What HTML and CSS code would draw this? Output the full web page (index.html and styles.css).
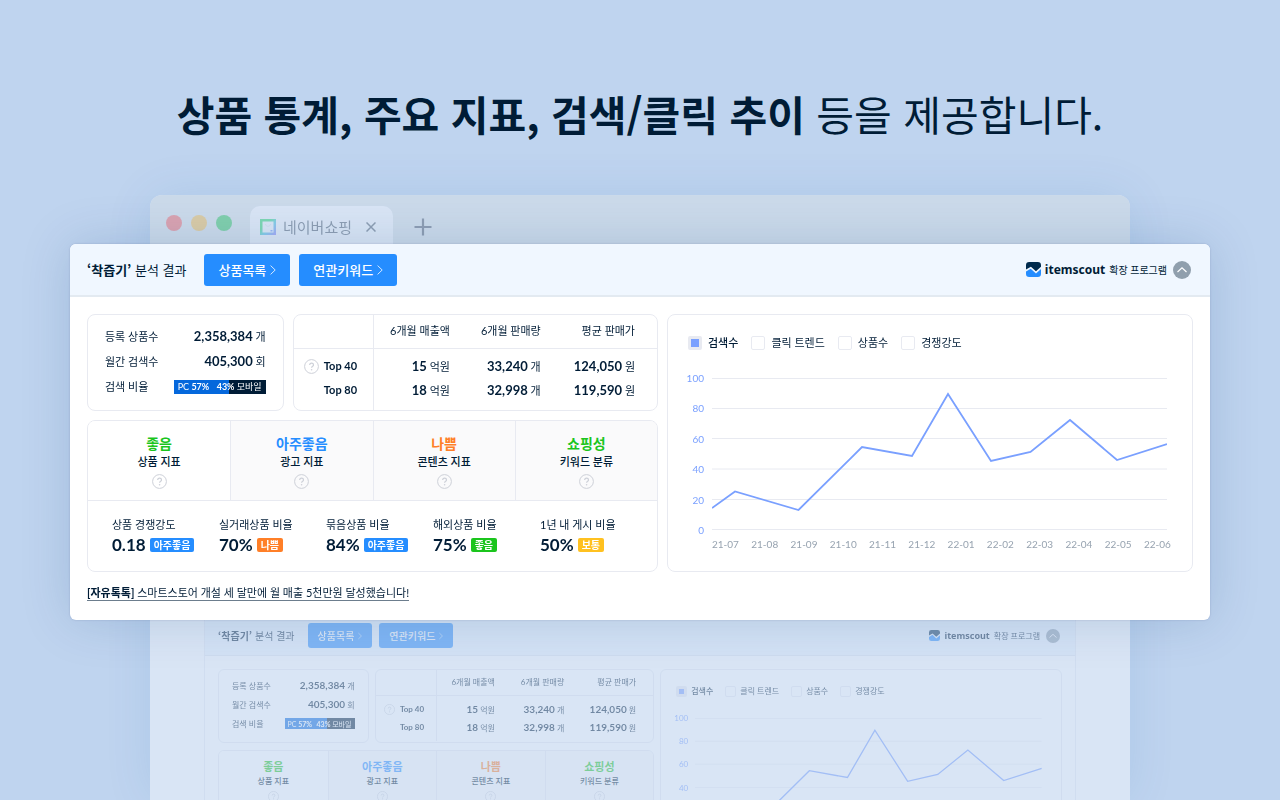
FILE: index.html
```html
<!DOCTYPE html>
<html lang="ko">
<head>
    <meta charset="UTF-8">
    <meta name="viewport" content="width=device-width, initial-scale=1.0">
    <title>itemscout 확장 프로그램</title>
    <link rel="stylesheet" href="styles.css">
</head>
<body>
    <!-- shared icons -->
    <svg class="sprite" width="0" height="0">
        <symbol id="logo" viewBox="0 0 14 14">
            <path d="M3 0h8a3 3 0 0 1 3 3v1.5L9.3 8.6 4.6 4.4 0 7V3a3 3 0 0 1 3-3z" fill="#002b4d"/>
            <path d="M0 8.8l4.4-2.6 4.9 4.6L14 6.6V11a3 3 0 0 1-3 3H3a3 3 0 0 1-3-3z" fill="#258dff"/>
        </symbol>
        <symbol id="chevron" viewBox="0 0 6 10">
            <path d="M.6.6L5.2 5 .6 9.4" fill="none" stroke="#fff" stroke-width=".8"/>
        </symbol>
        <symbol id="up" viewBox="0 0 18 18">
            <circle cx="9" cy="9" r="9" fill="#909fad"/>
            <path d="M4.5 11L9 6.8l4.500 4.200" fill="none" stroke="#fff" stroke-width="1.200"/>
        </symbol>
        <symbol id="help" viewBox="0 0 15 15">
            <circle cx="7.5" cy="7.5" r="6.900" fill="none" stroke="#cdd0d8" stroke-width="1"/>
            <path d="M5.700 6.100c0-1.200.8-1.900 1.900-1.900s1.900.7 1.900 1.700c0 1.300-1.900 1.400-1.900 2.900" fill="none" stroke="#cdd0d8" stroke-width="1.200"/>
            <circle cx="7.600" cy="10.700" r=".8" fill="#cdd0d8"/>
        </symbol>
        <symbol id="plot" viewBox="0 0 455 152" preserveAspectRatio="none">
            <path class="plot-grid" d="M0 .5h455M0 30.500h455M0 60.500h455M0 91h455M0 121.500h455M0 151.500h455"/>
            <path class="plot-line" d="M0 130L23 113.500 86.500 132 150 69 200 78 236 16 279 83 318.500 74 358 42 405 82 455 66"/>
        </symbol>
    </svg>

    <h1 class="headline"><strong>상품 통계, 주요 지표, 검색/클릭 추이</strong> 등을 제공합니다.</h1>

    <main class="stage">
        <div class="browser">
            <div class="browser-bar">
                <div class="dots">
                    <span class="dot red"></span>
                    <span class="dot yellow"></span>
                    <span class="dot green"></span>
                </div>
                <div class="browser-tab">
                    <svg class="favicon" viewBox="0 0 16 16">
                        <defs>
                            <linearGradient id="fav" x1="0" y1="0" x2="1" y2="1">
                                <stop offset=".3" stop-color="#1fdd60"/>
                                <stop offset=".6" stop-color="#35c3e0"/>
                                <stop offset="1" stop-color="#7a7cff"/>
                            </linearGradient>
                        </defs>
                        <rect x="1.250" y="1.250" width="13.500" height="13.500" fill="none" stroke="url(#fav)" stroke-width="2.500"/>
                        <path d="M5.500 5c0 3 5 3 5 0" fill="none" stroke="#e3e8ee" stroke-width="1"/>
                        <rect x="10.500" y="11" width="2" height="1.500" fill="#5a8cff"/>
                    </svg>
                    <span>네이버쇼핑</span>
                    <svg class="close" viewBox="0 0 10 10"><path d="M.5.5l9 9M9.500.5l-9 9" stroke="#47525e" stroke-width="1.500"/></svg>
                </div>
                <svg class="plus" viewBox="0 0 18 18"><path d="M9 .5v17M.5 9h17" stroke="#47525e" stroke-width="2.200"/></svg>
            </div>
            <div class="site">
                <section class="panel small">
                    <header class="panel-head">
                        <h2 class="panel-title"><b>‘착즙기’</b> 분석 결과</h2>
                        <button class="btn">상품목록<svg class="chevron"><use href="#chevron"/></svg></button>
                        <button class="btn">연관키워드<svg class="chevron"><use href="#chevron"/></svg></button>
                        <div class="brand">
                            <svg class="logo"><use href="#logo"/></svg>
                            <span class="brand-name">itemscout</span>
                            <span class="brand-sub">확장 프로그램</span>
                            <button class="toggle" aria-label="접기"><svg><use href="#up"/></svg></button>
                        </div>
                    </header>
                    <div class="panel-body">
                        <div class="left">
                            <div class="summary">
                                <dl class="card stats">
                                    <div><dt>등록 상품수</dt><dd><b>2,358,384</b> 개</dd></div>
                                    <div><dt>월간 검색수</dt><dd><b>405,300</b> 회</dd></div>
                                    <div><dt>검색 비율</dt><dd class="ratio"><span>PC <b>57%</b></span><span><b>43%</b> 모바일</span></dd></div>
                                </dl>
                                <div class="card">
                                    <table class="sales">
                                        <thead>
                                            <tr><th></th><th>6개월 매출액</th><th>6개월 판매량</th><th>평균 판매가</th></tr>
                                        </thead>
                                        <tbody>
                                            <tr><th><svg class="help"><use href="#help"/></svg>Top 40</th><td><b>15</b> 억원</td><td><b>33,240</b> 개</td><td><b>124,050</b> 원</td></tr>
                                            <tr><th>Top 80</th><td><b>18</b> 억원</td><td><b>32,998</b> 개</td><td><b>119,590</b> 원</td></tr>
                                        </tbody>
                                    </table>
                                </div>
                            </div>
                            <div class="card">
                                <div class="grades">
                                    <button class="grade active"><strong class="c-green">좋음</strong><span>상품 지표</span><svg class="help"><use href="#help"/></svg></button>
                                    <button class="grade"><strong class="c-blue">아주좋음</strong><span>광고 지표</span><svg class="help"><use href="#help"/></svg></button>
                                    <button class="grade"><strong class="c-orange">나쁨</strong><span>콘텐츠 지표</span><svg class="help"><use href="#help"/></svg></button>
                                    <button class="grade"><strong class="c-green">쇼핑성</strong><span>키워드 분류</span><svg class="help"><use href="#help"/></svg></button>
                                </div>
                            </div>
                        </div>
                        <div class="card chart">
                            <div class="legend">
                                <label><input type="checkbox" checked>검색수</label>
                                <label><input type="checkbox">클릭 트렌드</label>
                                <label><input type="checkbox">상품수</label>
                                <label><input type="checkbox">경쟁강도</label>
                            </div>
                            <div class="plot">
                                <div class="y-axis"><span>100</span><span>80</span><span>60</span><span>40</span><span>20</span><span>0</span></div>
                                <svg class="plot-area"><use href="#plot"/></svg>
                            </div>
                        </div>
                    </div>
                </section>
            </div>
        </div>

        <section class="panel front">
            <header class="panel-head">
                <h2 class="panel-title"><b>‘착즙기’</b> 분석 결과</h2>
                <button class="btn">상품목록<svg class="chevron"><use href="#chevron"/></svg></button>
                <button class="btn">연관키워드<svg class="chevron"><use href="#chevron"/></svg></button>
                <div class="brand">
                    <svg class="logo"><use href="#logo"/></svg>
                    <span class="brand-name">itemscout</span>
                    <span class="brand-sub">확장 프로그램</span>
                    <button class="toggle" aria-label="접기"><svg><use href="#up"/></svg></button>
                </div>
            </header>
            <div class="panel-body">
                <div class="left">
                    <div class="summary">
                        <dl class="card stats">
                            <div><dt>등록 상품수</dt><dd><b>2,358,384</b> 개</dd></div>
                            <div><dt>월간 검색수</dt><dd><b>405,300</b> 회</dd></div>
                            <div><dt>검색 비율</dt><dd class="ratio"><span>PC <b>57%</b></span><span><b>43%</b> 모바일</span></dd></div>
                        </dl>
                        <div class="card">
                            <table class="sales">
                                <thead>
                                    <tr><th></th><th>6개월 매출액</th><th>6개월 판매량</th><th>평균 판매가</th></tr>
                                </thead>
                                <tbody>
                                    <tr><th><svg class="help"><use href="#help"/></svg>Top 40</th><td><b>15</b> 억원</td><td><b>33,240</b> 개</td><td><b>124,050</b> 원</td></tr>
                                    <tr><th>Top 80</th><td><b>18</b> 억원</td><td><b>32,998</b> 개</td><td><b>119,590</b> 원</td></tr>
                                </tbody>
                            </table>
                        </div>
                    </div>
                    <div class="card">
                        <div class="grades">
                            <button class="grade active"><strong class="c-green">좋음</strong><span>상품 지표</span><svg class="help"><use href="#help"/></svg></button>
                            <button class="grade"><strong class="c-blue">아주좋음</strong><span>광고 지표</span><svg class="help"><use href="#help"/></svg></button>
                            <button class="grade"><strong class="c-orange">나쁨</strong><span>콘텐츠 지표</span><svg class="help"><use href="#help"/></svg></button>
                            <button class="grade"><strong class="c-green">쇼핑성</strong><span>키워드 분류</span><svg class="help"><use href="#help"/></svg></button>
                        </div>
                        <dl class="rates">
                            <div><dt>상품 경쟁강도</dt><dd>0.18<span class="badge blue">아주좋음</span></dd></div>
                            <div><dt>실거래상품 비율</dt><dd>70%<span class="badge orange">나쁨</span></dd></div>
                            <div><dt>묶음상품 비율</dt><dd>84%<span class="badge blue">아주좋음</span></dd></div>
                            <div><dt>해외상품 비율</dt><dd>75%<span class="badge green">좋음</span></dd></div>
                            <div><dt>1년 내 게시 비율</dt><dd>50%<span class="badge yellow">보통</span></dd></div>
                        </dl>
                    </div>
                </div>
                <div class="card chart">
                    <div class="legend">
                        <label><input type="checkbox" checked>검색수</label>
                        <label><input type="checkbox">클릭 트렌드</label>
                        <label><input type="checkbox">상품수</label>
                        <label><input type="checkbox">경쟁강도</label>
                    </div>
                    <div class="plot">
                        <div class="y-axis"><span>100</span><span>80</span><span>60</span><span>40</span><span>20</span><span>0</span></div>
                        <svg class="plot-area"><use href="#plot"/></svg>
                    </div>
                    <div class="x-axis">
                        <span>21-07</span><span>21-08</span><span>21-09</span><span>21-10</span><span>21-11</span><span>21-12</span><span>22-01</span><span>22-02</span><span>22-03</span><span>22-04</span><span>22-05</span><span>22-06</span>
                    </div>
                </div>
            </div>
            <a class="talk" href="#"><b>[자유톡톡]</b> 스마트스토어 개설 세 달만에 월 매출 5천만원 달성했습니다!</a>
        </section>
    </main>
</body>
</html>
```

FILE: styles.css
```css
* {
    box-sizing: border-box;
}
body {
    margin: 0;
    height: 100vh;
    overflow: hidden;
    display: flex;
    flex-direction: column;
    background: #bfd4ef;
    color: #001c36;
    font-family: Lato, "Noto Sans CJK KR", sans-serif;
}
h1, h2, dl, dd {
    margin: 0;
}
button {
    font: inherit;
    color: inherit;
    border: none;
    padding: 0;
    cursor: pointer;
}
svg {
    display: block;
}
.sprite {
    position: absolute;
}

.headline {
    padding: 81px 0 50px;
    text-align: center;
    font-family: "Noto Sans CJK KR", sans-serif;
    font-size: 41px;
    line-height: 64px;
    font-weight: 400;
}
.headline strong {
    font-weight: 700;
}

/* browser window and front panel share one cell */
.stage {
    flex: 1;
    min-height: 0;
    display: grid;
}
.browser,
.front {
    grid-area: 1 / 1;
}

/* browser */
.browser {
    margin: 0 150px;
    min-height: 0;
    overflow: hidden;
    background: #fff;
    border-radius: 12px 12px 0 0;
    opacity: 0.41;
    box-shadow: 0 0 50px rgba(0, 100, 180, 0.25);
}
.browser-bar {
    display: flex;
    align-items: flex-end;
    height: 50px;
    padding-left: 16px;
    background: #dde3e5;
}
.dots {
    display: flex;
    gap: 9px;
    align-self: center;
    padding-top: 6px;
    margin-right: 18px;
}
.dot {
    width: 16px;
    height: 16px;
    border-radius: 50%;
}
.red { background: #ff5f5a; }
.yellow { background: #ffbf40; }
.green { background: #28c850; }
.browser-tab {
    display: flex;
    align-items: center;
    width: 143px;
    height: 39px;
    padding: 3px 10px 0;
    background: #fff;
    border-radius: 10px 10px 0 0;
    color: #47525e;
    font-size: 15px;
    line-height: 20px;
}
.favicon {
    width: 16px;
    height: 16px;
    margin-right: 7px;
}
.close {
    width: 10px;
    height: 10px;
    margin-left: 14px;
}
.plus {
    width: 18px;
    height: 18px;
    margin: 0 0 9px 21px;
}
.site {
    padding: 371px 54px 0;
}

/* panel */
.panel {
    --text: 11px;
    --title: 13px;
    --name: 12px;
    --number: 13px;
    --grade: 14px;
    --tiny: 10px;
    --ratio: 9px;
    --axis: 10px;
    --line: 16px;
    --gutter: 17px;
    --gap: 9px;
    --head: 53px;
    --btn-h: 32px;
    --btn-pad: 14px;
    --row: 25px;
    --row-sales: 24px;
    --inset: 17px;
    --ratio-w: 92px;
    --ratio-h: 14px;
    --th-h: 33px;
    --icon: 15px;
    --logo: 15px;
    --toggle: 18px;
    --box: 14px;
    --radius: 8px;
    --grade-h: 79px;
    --grade-pad: 12px;
    --plot-h: 152px;
    --legend-mb: 27px;
    --legend-gap: 13px;
    background: #fff;
    font-size: var(--text);
    line-height: var(--line);
}
.small {
    --text: 8px;
    --title: 10px;
    --name: 9px;
    --number: 10px;
    --grade: 11px;
    --tiny: 8px;
    --ratio: 7px;
    --axis: 8px;
    --line: 12px;
    --gutter: 13px;
    --gap: 7px;
    --head: 40px;
    --btn-h: 25px;
    --btn-pad: 10px;
    --row: 19px;
    --row-sales: 18px;
    --inset: 13px;
    --ratio-w: 70px;
    --ratio-h: 11px;
    --th-h: 25px;
    --icon: 11px;
    --logo: 11px;
    --toggle: 14px;
    --box: 11px;
    --radius: 6px;
    --grade-h: 61px;
    --grade-pad: 8px;
    --plot-h: 116px;
    --legend-mb: 21px;
    --legend-gap: 12px;
    border: 1px solid #e8ecf2;
    border-top: none;
}
.front {
    align-self: start;
    margin: 49px 70px 0;
    z-index: 1;
    border-radius: 6px;
    box-shadow: 0 0 2px rgba(60, 70, 120, 0.25), 0 0 50px rgba(0, 60, 120, 0.17);
}
.panel-head {
    display: flex;
    align-items: center;
    height: var(--head);
    padding: 0 var(--gutter);
    background: #f0f7ff;
    border-bottom: 2px solid #e3eaf1;
    border-radius: 6px 6px 0 0;
}
.panel-title {
    margin-right: 18px;
    font-family: "Noto Sans CJK KR", sans-serif;
    font-size: var(--title);
    font-weight: 400;
}
.small .panel-title {
    margin-right: 13px;
}
.small .panel-head {
    border-bottom-width: 1px;
}
.btn {
    display: flex;
    align-items: center;
    gap: 4px;
    height: var(--btn-h);
    padding: 0 var(--btn-pad);
    margin-right: var(--gap);
    background: #258dff;
    border-radius: 3px;
    color: #fff;
    font-size: var(--title);
    font-weight: 500;
}
.chevron {
    width: 6px;
    height: 12px;
}
.small .chevron {
    width: 4px;
    height: 8px;
}
.brand {
    display: flex;
    align-items: center;
    gap: 4px;
    margin-left: auto;
    padding-right: 2px;
}
.logo {
    width: var(--logo);
    height: var(--logo);
}
.brand-name {
    font-family: "Noto Sans", sans-serif;
    font-size: var(--name);
    font-weight: 700;
}
.brand-sub {
    font-size: var(--tiny);
}
.toggle {
    margin-left: 2px;
    background: none;
}
.toggle svg {
    width: var(--toggle);
    height: var(--toggle);
}

.panel-body {
    display: grid;
    grid-template-columns: 571fr 526fr;
    gap: var(--gap);
    padding: var(--gutter) var(--gutter) 0;
}
.left {
    display: flex;
    flex-direction: column;
    gap: var(--gap);
}
.summary {
    display: grid;
    grid-template-columns: 197fr 366fr;
    gap: var(--gap);
}
.small .panel-body,
.small .summary {
    column-gap: 6px;
}
.card {
    overflow: hidden;
    border: 1px solid #e8eaf1;
    border-radius: var(--radius);
}

/* summary */
.stats {
    padding: 9px var(--inset) 11px;
}
.small .stats {
    padding: 6px var(--inset) 9px;
}
.stats div {
    display: flex;
    align-items: center;
    justify-content: space-between;
    height: var(--row);
}
.stats b,
.sales td b {
    font-size: var(--number);
}
.stats .ratio {
    display: flex;
    align-items: center;
    justify-content: space-between;
    width: var(--ratio-w);
    height: var(--ratio-h);
    padding: 0 4px;
    background: linear-gradient(90deg, #0568dc 60%, #001c36 60%);
    color: #fff;
    font-size: var(--ratio);
    white-space: nowrap;
}
.small .ratio {
    padding: 0 3px;
}
.stats .ratio b {
    font-size: inherit;
}
.sales {
    width: 100%;
    border-collapse: collapse;
    text-align: right;
    white-space: nowrap;
}
.sales th,
.sales td {
    height: var(--row-sales);
    padding: 0;
    text-align: right;
}
.sales thead th {
    height: var(--th-h);
    border-bottom: 1px solid #e8eaf1;
    font-weight: 400;
}
.sales th:first-child {
    width: 22%;
    padding-right: 16px;
    border-right: 1px solid #e8eaf1;
}
.sales th:nth-child(2) { width: 21%; }
.sales th:nth-child(3) { width: 25%; }
.sales th:last-child,
.sales td:last-child {
    padding-right: 22px;
}
.small .sales th:first-child { padding-right: 12px; }
.small .sales th:last-child,
.small .sales td:last-child { padding-right: 17px; }
.sales tbody tr:first-child > * {
    padding-top: 6px;
    height: calc(var(--row-sales) + 6px);
}
.sales tbody tr:last-child > * {
    padding-bottom: 8px;
    height: calc(var(--row-sales) + 8px);
}
.small .sales tbody tr:first-child > * {
    padding-top: 5px;
    height: calc(var(--row-sales) + 5px);
}
.small .sales tbody tr:last-child > * {
    padding-bottom: 5px;
    height: calc(var(--row-sales) + 5px);
}
.help {
    width: var(--icon);
    height: var(--icon);
}
.sales .help {
    display: inline-block;
    margin-right: 5px;
    vertical-align: -4px;
}
.small .sales .help {
    vertical-align: -3px;
}

/* grades */
.grades {
    display: grid;
    grid-template-columns: repeat(4, 1fr);
    border-bottom: 1px solid #e8eaf1;
}
.grade {
    display: flex;
    flex-direction: column;
    align-items: center;
    height: var(--grade-h);
    padding-top: var(--grade-pad);
    background: #fafafb;
    font-weight: 500;
    line-height: var(--line);
}
.grade + .grade {
    border-left: 1px solid #e8eaf1;
}
.grade.active {
    background: #fff;
}
.grade strong {
    font-size: var(--grade);
    line-height: 21px;
}
.small .grade strong {
    line-height: 16px;
}
.grade .help {
    margin-top: 4px;
}
.c-green { color: #1bc51d; }
.c-blue { color: #258dff; }
.c-orange { color: #ff7f27; }

/* rates */
.rates {
    display: grid;
    grid-template-columns: repeat(5, 1fr);
    padding: 16px 10px 14px 24px;
}
.rates dt,
.rates dd {
    white-space: nowrap;
}
.rates dd {
    display: flex;
    align-items: center;
    gap: 4px;
    height: 24px;
    font-size: 17px;
    font-weight: 700;
}
.badge {
    padding: 0 4px;
    border-radius: 2px;
    color: #fff;
    font-size: 10px;
    line-height: 14px;
}
.badge.blue { background: #258dff; }
.badge.orange { background: #ff7f27; }
.badge.green { background: #1bc51d; }
.badge.yellow { background: #ffc120; }

/* chart */
.chart {
    padding: 20px 25px 0 18px;
}
.small.panel .chart {
    padding: 15px 19px 0 13px;
}
.legend {
    display: flex;
    gap: var(--legend-gap);
    padding-left: 2px;
    margin-bottom: var(--legend-mb);
}
.legend label {
    display: flex;
    align-items: center;
    gap: 6px;
}
.small .legend label {
    gap: 4px;
}
.legend label:first-child {
    font-weight: 500;
}
.legend input {
    appearance: none;
    width: var(--box);
    height: var(--box);
    margin: 0;
    border: 1px solid #e8eaf1;
    border-radius: 2px;
    background: #fff;
}
.legend input:checked {
    border: 3px solid #e8eaf1;
    background: #7aa0ff;
}
.plot {
    display: flex;
    gap: 8px;
    height: var(--plot-h);
}
.y-axis {
    display: flex;
    flex-direction: column;
    justify-content: space-between;
    width: 18px;
    margin: -8px 0;
    color: #7aa0ff;
    font-size: var(--axis);
    text-align: right;
}
.small .plot {
    gap: 7px;
}
.small .y-axis {
    width: 14px;
    margin: -6px 0;
}
.plot-area {
    flex: 1;
    min-width: 0;
    height: 100%;
}
.plot-grid {
    fill: none;
    stroke: #e8eaf1;
    stroke-width: 1;
}
.plot-line {
    fill: none;
    stroke: #7aa0ff;
    stroke-width: 1.800;
}
.x-axis {
    display: flex;
    justify-content: space-between;
    margin: 6px -4px 0 26px;
    color: #97a3b0;
    font-size: var(--axis);
}

.talk {
    display: inline-block;
    margin: 13px var(--gutter) 19px;
    border-bottom: 1px solid #6c7d8d;
    color: inherit;
    line-height: 15px;
    text-decoration: none;
}
```
